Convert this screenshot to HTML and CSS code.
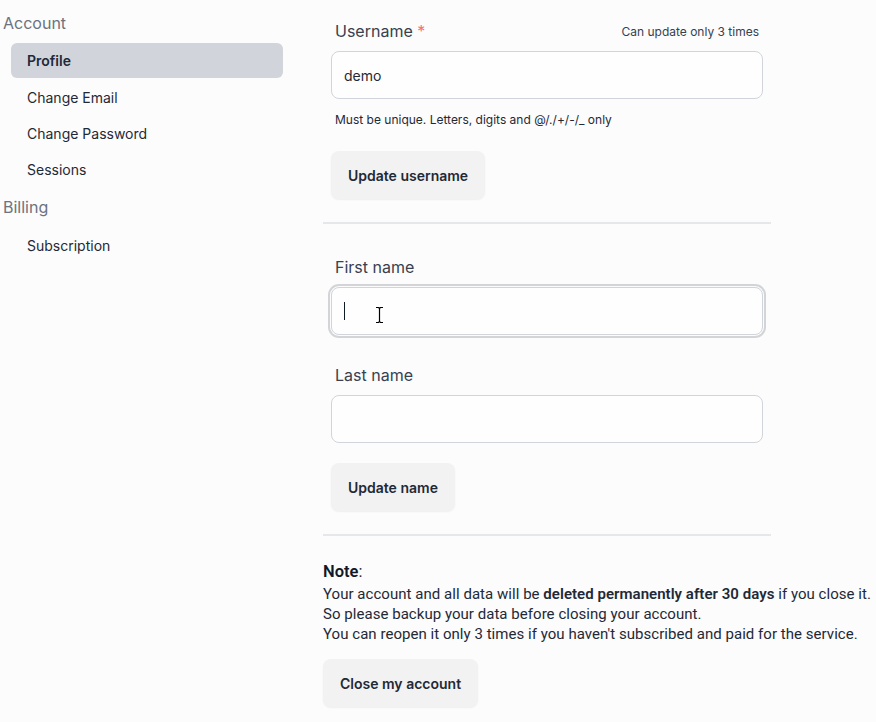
FILE: index.html
```html
<!DOCTYPE html>
<html lang="en">
<head>
<meta charset="utf-8">
<title>Profile</title>
<link rel="stylesheet" href="styles.css">
</head>
<body>
<div class="layout">
  <aside class="sidebar">
    <div class="nav-heading">Account</div>
    <a class="nav-item active">Profile</a>
    <a class="nav-item">Change Email</a>
    <a class="nav-item">Change Password</a>
    <a class="nav-item">Sessions</a>
    <div class="nav-heading">Billing</div>
    <a class="nav-item">Subscription</a>
  </aside>
  <main class="main">
    <section class="form-block">
      <div class="label-row">
        <label class="label">Username <span class="req">*</span></label>
        <span class="hint">Can update only 3 times</span>
      </div>
      <div class="input">demo</div>
      <p class="help">Must be unique. Letters, digits and @/./+/-/_ only</p>
      <button class="btn">Update username</button>
    </section>
    <hr class="divider">
    <section class="form-block">
      <div class="label-row"><label class="label">First name</label></div>
      <div class="field-wrap">
        <div class="input focused"><span class="caret"></span></div>
        <svg class="ibeam" width="9" height="18" viewBox="0 0 9 18">
          <path d="M1 1.5h2.5l1 1 1-1H8M4.5 2.5v13M1 16.5h2.5l1-1 1 1H8" fill="none" stroke="#fff" stroke-width="3"/>
          <path d="M1 1.5h2.5l1 1 1-1H8M4.5 2.5v13M1 16.5h2.5l1-1 1 1H8" fill="none" stroke="#000" stroke-width="1.2"/>
        </svg>
      </div>
      <div class="label-row gap-top"><label class="label">Last name</label></div>
      <div class="input"></div>
      <button class="btn btn-name">Update name</button>
    </section>
    <hr class="divider">
    <section class="note">
      <div class="note-title"><strong>Note</strong>:</div>
      <p class="note-text">Your account and all data will be <b>deleted permanently after 30 days</b> if you close it.<br>So please backup your data before closing your account.<br>You can reopen it only 3 times if you haven't subscribed and paid for the service.</p>
      <button class="btn btn-close">Close my account</button>
    </section>
  </main>
</div>
</body>
</html>
```

FILE: styles.css
```css
* { box-sizing: border-box; }
html, body { margin: 0; padding: 0; }
body {
  background: #fbfcfb;
  font-family: Inter, "Noto Sans", sans-serif;
  color: #1f2937;
  width: 876px;
  height: 722px;
  overflow: hidden;
}
.layout {
  display: flex;
  gap: 32px;
}
.sidebar {
  width: 291px;
  padding: 11px 0 0 3px;
  display: flex;
  flex-direction: column;
}
.nav-heading {
  font-size: 16px;
  line-height: 24px;
  color: #6b7280;
  margin-bottom: 8px;
}
.nav-item {
  display: block;
  margin-left: 8px;
  width: 272px;
  height: 36px;
  line-height: 35px;
  padding: 1px 0 0 16px;
  font-size: 14px;
  color: #1f2937;
  border-radius: 6px;
}
.nav-item.active {
  background: #d1d5db;
  font-weight: 600;
  height: 35px;
  line-height: 34px;
  margin-bottom: 1px;
}
.nav-item + .nav-heading { margin-top: 8px; }
.main {
  width: 448px;
  padding-top: 19px;
  display: flex;
  flex-direction: column;
}
.form-block {
  padding: 0 8px;
  display: flex;
  flex-direction: column;
  align-items: flex-start;
}
.label-row {
  display: flex;
  justify-content: space-between;
  align-items: center;
  width: 100%;
  padding: 0 4px;
  height: 24px;
  margin-bottom: 8px;
}
.label-row.gap-top { margin-top: 28px; }
.label {
  font-size: 16px;
  color: #374151;
}
.req { color: #f87171; }
.hint {
  font-size: 12px;
  color: #374151;
}
.input {
  width: 432px;
  height: 48px;
  border: 1px solid #d1d5db;
  border-radius: 8px;
  background: #fdfefd;
  padding: 1px 12px 0;
  font-size: 14px;
  line-height: 46px;
  color: #1f2937;
}
.input.focused {
  box-shadow: 0 0 0 1px #fbfcfb, 0 0 0 3px #d2d4d8;
  position: relative;
  padding-top: 0;
}
.caret {
  display: inline-block;
  width: 1px;
  height: 18px;
  background: #111827;
  vertical-align: middle;
  margin-top: -3px;
}
.field-wrap { position: relative; }
.ibeam {
  position: absolute;
  left: 44px;
  top: 19px;
}
.help {
  margin: 12px 0 0 4px;
  font-size: 12px;
  line-height: 18px;
  color: #1f2937;
}
.btn {
  margin-top: 22px;
  height: 48px;
  padding: 0 17px;
  border: none;
  border-radius: 8px;
  background: #f2f2f2;
  box-shadow: 0 1px 2px rgba(0,0,0,0.06);
  font-family: Inter, "Noto Sans", sans-serif;
  font-weight: 600;
  font-size: 14px;
  color: #1f2937;
}
.btn-name { margin-top: 20px; }
.divider {
  margin: 23px 0 0 0;
  width: 448px;
  height: 2px;
  border: none;
  background: #e5e7eb;
}
.main > .divider + .form-block { margin-top: 31px; }
.note {
  margin-top: 25px;
  font-family: Roboto, "Liberation Sans", sans-serif;
  font-size: 15px;
  color: #1f2937;
  display: flex;
  flex-direction: column;
  align-items: flex-start;
}
.note-title {
  font-size: 16.5px;
  line-height: 20px;
  margin-top: 1px;
}
.note-title strong { font-weight: 600; color: #111827; }
.note-text {
  margin: 2px 0 0 0;
  line-height: 20px;
  white-space: nowrap;
  letter-spacing: 0.04px;
}
.note-text b { font-weight: 600; }
.btn-close { margin-top: 15px; }
```
